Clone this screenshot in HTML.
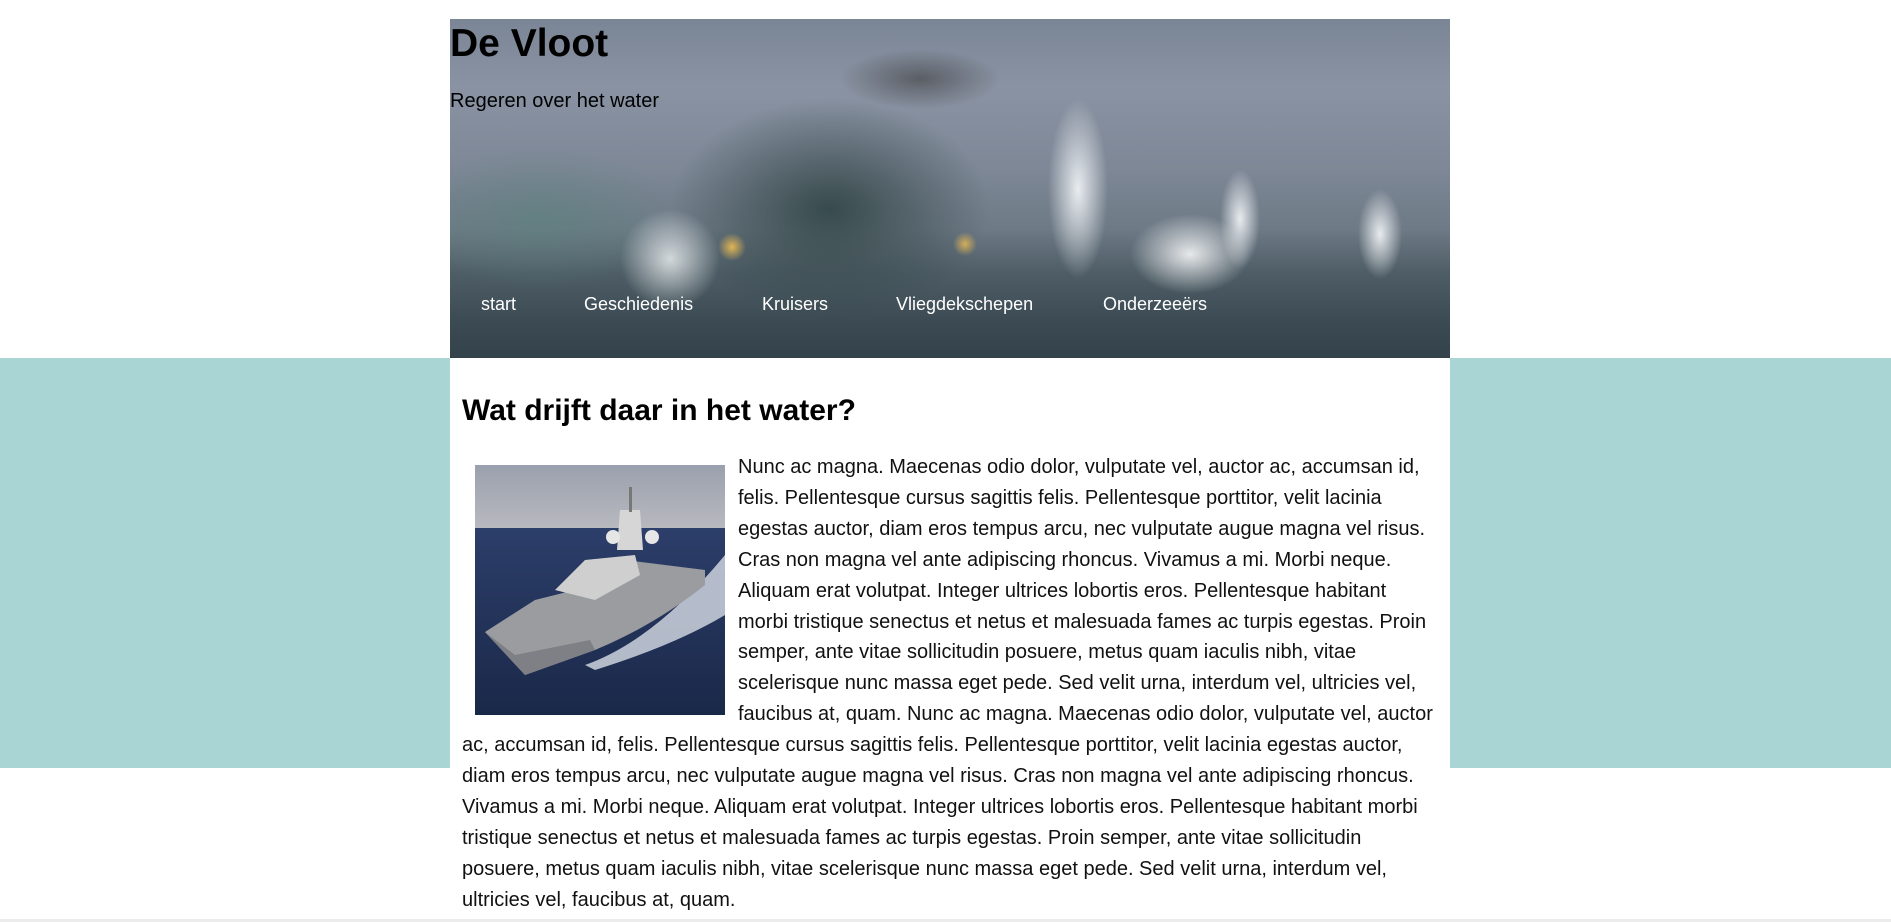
<!DOCTYPE html>
<html><head><meta charset="utf-8"><style>
html,body{margin:0;padding:0;width:1891px;height:922px;overflow:hidden;background:#fff;font-family:"Liberation Sans",Arial,sans-serif;}
.teal{position:absolute;left:0;top:358px;width:1891px;height:410px;background:#a9d5d4;}
.bottomline{position:absolute;left:0;top:919px;width:1891px;height:3px;background:#ececec;}
header{position:absolute;left:450px;top:19px;width:1000px;height:339px;overflow:hidden;
background:
 radial-gradient(ellipse 60px 40px at 740px 235px,rgba(255,255,255,.85),rgba(255,255,255,0)),
 radial-gradient(ellipse 30px 90px at 628px 170px,rgba(245,248,250,.9),rgba(255,255,255,0)),
 radial-gradient(ellipse 20px 50px at 790px 200px,rgba(245,248,250,.9),rgba(255,255,255,0)),
 radial-gradient(ellipse 22px 45px at 930px 215px,rgba(245,248,250,.9),rgba(255,255,255,0)),
 radial-gradient(ellipse 50px 50px at 220px 240px,rgba(240,245,245,.8),rgba(255,255,255,0)),
 radial-gradient(ellipse 14px 14px at 282px 228px,rgba(240,190,80,.9),rgba(0,0,0,0)),
 radial-gradient(ellipse 12px 12px at 515px 225px,rgba(240,190,80,.8),rgba(0,0,0,0)),
 radial-gradient(ellipse 160px 110px at 380px 190px,rgba(45,65,65,.85),rgba(60,80,85,0)),
 radial-gradient(ellipse 140px 70px at 90px 200px,rgba(90,130,125,.6),rgba(60,80,85,0)),
 radial-gradient(ellipse 80px 30px at 470px 60px,rgba(60,60,60,.6),rgba(60,60,60,0)),
 linear-gradient(180deg,#7a8595 0%,#8a93a3 20%,#7d8796 45%,#6e7a86 62%,#4e5d66 75%,#3b4a52 90%,#34434b 100%);}
header h1{margin:0;position:absolute;left:0;top:2px;font-size:39px;line-height:45px;font-weight:bold;color:#000;}
header .sub{position:absolute;left:0;top:71px;font-size:20px;color:#000;}
nav a{position:absolute;top:273px;font-size:18px;color:#fff;text-decoration:none;line-height:24px;}
main{position:absolute;left:450px;top:358px;width:1000px;height:561px;background:#fff;}
h2{position:absolute;left:12px;top:36px;margin:0;font-size:30px;font-weight:bold;line-height:34px;}
p{position:absolute;left:12px;top:94px;width:977px;margin:0;font-size:20px;line-height:30.9px;color:#111;}
.ship{float:left;width:250px;height:250px;margin:13px 13px 4px 13px;}
</style></head><body>
<div class="teal"></div>
<div class="bottomline"></div>
<header>
<h1>De Vloot</h1>
<div class="sub">Regeren over het water</div>
<nav><a style="left:31px">start</a><a style="left:134px">Geschiedenis</a><a style="left:312px">Kruisers</a><a style="left:446px">Vliegdekschepen</a><a style="left:653px">Onderzeeërs</a></nav>
</header>
<main>
<h2>Wat drijft daar in het water?</h2>
<p><svg class="ship" viewBox="0 0 250 250"><defs><linearGradient id="sk" x1="0" y1="0" x2="0" y2="1"><stop offset="0" stop-color="#9aa0ad"/><stop offset="1" stop-color="#b8b9bf"/></linearGradient><linearGradient id="se" x1="0" y1="0" x2="0" y2="1"><stop offset="0" stop-color="#2c3e6a"/><stop offset="1" stop-color="#1a2848"/></linearGradient></defs>
<rect width="250" height="63" fill="url(#sk)"/><rect y="63" width="250" height="187" fill="url(#se)"/>
<path d="M110 200 Q180 175 250 90 L250 150 Q200 180 120 205Z" fill="#d8dde6" opacity=".8"/>
<path d="M10 167 L60 135 L100 125 L150 95 L230 105 L230 120 Q180 160 120 185 L50 210 Z" fill="#9a9ca0"/>
<path d="M80 125 L110 95 L160 90 L165 110 L120 135Z" fill="#cfcfd0"/>
<path d="M145 45 L165 45 L168 85 L142 85Z" fill="#d6d6d6"/><circle cx="138" cy="72" r="7" fill="#e6e6e6"/><circle cx="177" cy="72" r="7" fill="#e6e6e6"/>
<rect x="154" y="22" width="3" height="25" fill="#777"/>
<path d="M10 167 L50 210 L120 185 L115 175 L40 190Z" fill="#7e8085"/>
</svg>Nunc ac magna. Maecenas odio dolor, vulputate vel, auctor ac, accumsan id, felis. Pellentesque cursus sagittis felis. Pellentesque porttitor, velit lacinia egestas auctor, diam eros tempus arcu, nec vulputate augue magna vel risus. Cras non magna vel ante adipiscing rhoncus. Vivamus a mi. Morbi neque. Aliquam erat volutpat. Integer ultrices lobortis eros. Pellentesque habitant morbi tristique senectus et netus et malesuada fames ac turpis egestas. Proin semper, ante vitae sollicitudin posuere, metus quam iaculis nibh, vitae scelerisque nunc massa eget pede. Sed velit urna, interdum vel, ultricies vel, faucibus at, quam. Nunc ac magna. Maecenas odio dolor, vulputate vel, auctor ac, accumsan id, felis. Pellentesque cursus sagittis felis. Pellentesque porttitor, velit lacinia egestas auctor, diam eros tempus arcu, nec vulputate augue magna vel risus. Cras non magna vel ante adipiscing rhoncus. Vivamus a mi. Morbi neque. Aliquam erat volutpat. Integer ultrices lobortis eros. Pellentesque habitant morbi tristique senectus et netus et malesuada fames ac turpis egestas. Proin semper, ante vitae sollicitudin posuere, metus quam iaculis nibh, vitae scelerisque nunc massa eget pede. Sed velit urna, interdum vel, ultricies vel, faucibus at, quam.</p>
</main>
</body></html>
